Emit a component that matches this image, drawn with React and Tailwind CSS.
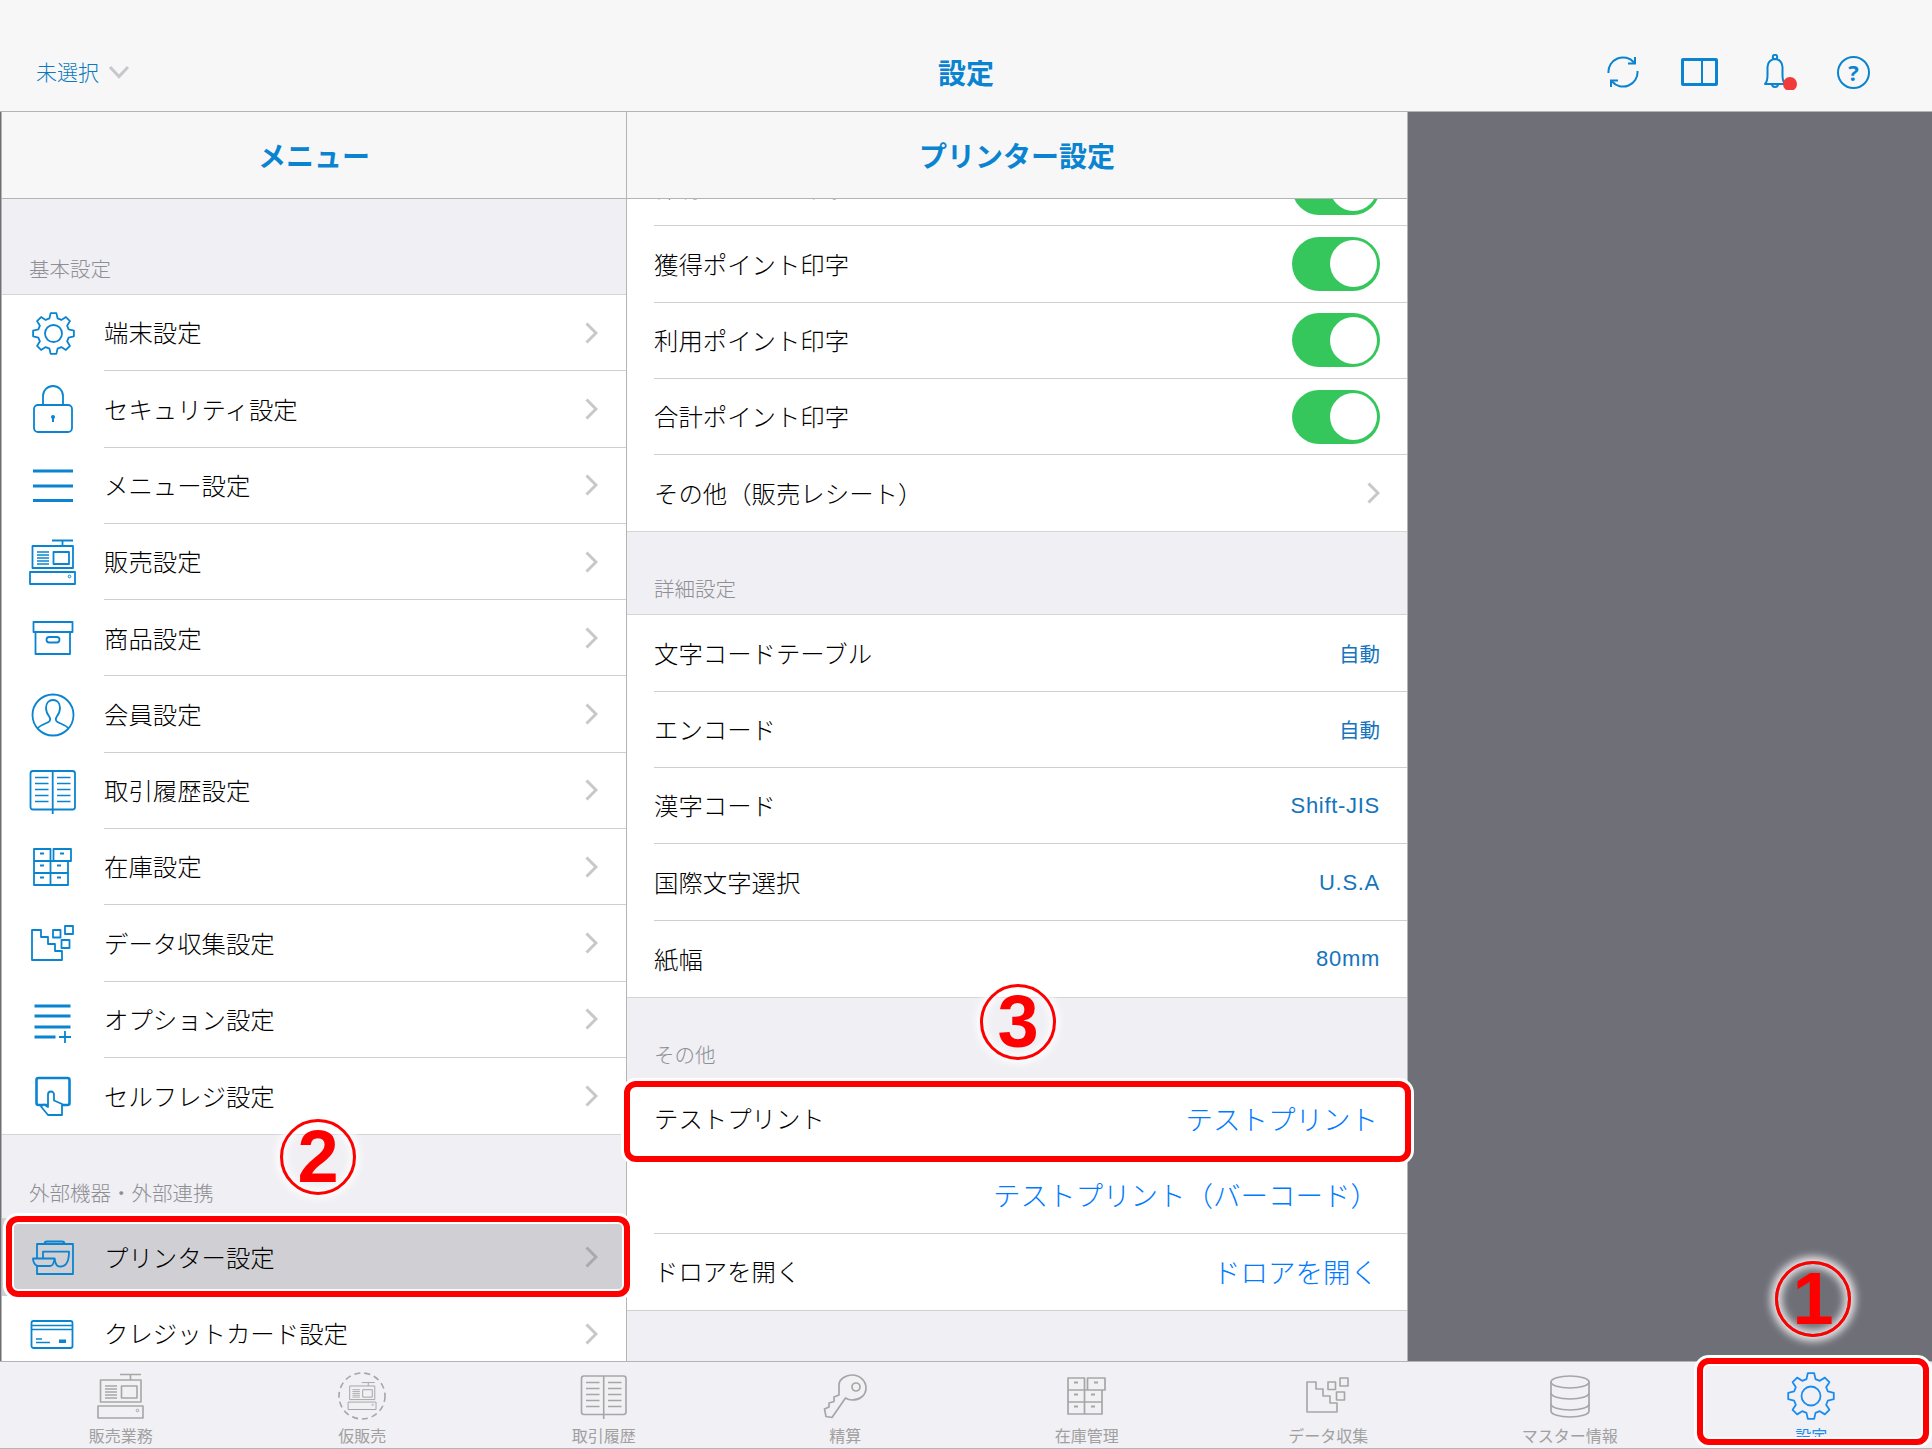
const gearPath = () => {
  const teeth = 8;
  const pts = [];
  for (let i = 0; i < teeth; i++) {
    const a = (i * 360) / teeth - 90;
    const list = [
      [a - 15, 17.5],
      [a - 8, 23],
      [a + 8, 23],
      [a + 15, 17.5],
    ];
    list.forEach(([deg, r]) => {
      const rad = (deg * Math.PI) / 180;
      pts.push(`${(24 + r * Math.cos(rad)).toFixed(2)} ${(24 + r * Math.sin(rad)).toFixed(2)}`);
    });
  }
  return "M" + pts.join("L") + "Z";
};

const Svg = ({ size = 48, sw = 1.8, children }) => (
  <svg width={size} height={size} viewBox="0 0 48 48" fill="none" stroke="currentColor" strokeWidth={sw} strokeLinejoin="round">
    {children}
  </svg>
);

const GearIcon = ({ size = 43, sw = 2 }) => (
  <Svg size={size} sw={sw}>
    <path d={gearPath()} />
    <circle cx="24" cy="24" r="9.5" />
  </Svg>
);

const LockIcon = () => (
  <Svg>
    <rect x="5" y="20" width="38" height="27" rx="4" />
    <path d="M14 20V11a10 10 0 0 1 20 0v9" />
    <circle cx="24" cy="32" r="2" fill="currentColor" stroke="none" />
    <rect x="23" y="33" width="2" height="4" fill="currentColor" stroke="none" />
  </Svg>
);

const MenuIcon = () => (
  <Svg sw={3.2}>
    <path d="M4 9h40M4 24h40M4 38.5h40" />
  </Svg>
);

const RegisterShape = () => (
  <>
    <path d="M23 2.5h21M33.5 2.5V8" />
    <rect x="3.5" y="8" width="40.5" height="22" />
    <rect x="24.5" y="14" width="15.5" height="12" />
    <path d="M8 14h12M8 17h12M8 20h12M8 23h12M8 26h12" strokeWidth="1.4" />
    <rect x="1" y="34" width="45" height="12" />
    <circle cx="40.5" cy="38.5" r="1.3" strokeWidth="1" />
  </>
);

const RegisterIcon = ({ sw = 1.8 }) => (
  <Svg sw={sw}>
    <RegisterShape />
  </Svg>
);

const BoxIcon = () => (
  <Svg>
    <rect x="4.5" y="8" width="39" height="10" />
    <rect x="6.5" y="18" width="34.5" height="22" />
    <rect x="17.5" y="23" width="13" height="5.5" rx="2.7" />
  </Svg>
);

const PersonIcon = () => (
  <Svg>
    <circle cx="24" cy="24" r="20.5" />
    <path d="M8.5 37.5c3-4 8-4.5 11-6.5c2-1.200 2-3 1-5c-2-2.500-3.500-5-3.500-9c0-5 3-8 7-8s7 3 7 8c0 4-1.500 6.500-3.500 9c-1 2-1 3.800 1 5c3 2 8 2.500 11 6.500" />
  </Svg>
);

const BookIcon = ({ sw = 1.8 }) => (
  <Svg sw={sw}>
    <rect x="1.5" y="4" width="44.5" height="38.500" rx="2.500" />
    <path d="M23.700 4v43" />
    <path d="M6 10.500h13.500M6 16.500h13.500M6 22.500h13.500M6 28.500h13.500M6 34.500h13.500M28 10.500h13.500M28 16.500h13.500M28 22.500h13.500M28 28.500h13.500M28 34.500h13.500" strokeWidth="1.500" />
  </Svg>
);

const ShelvesIcon = ({ sw = 1.8 }) => (
  <Svg sw={sw}>
    <path d="M5 6h16.500v12H5zM24.500 6H42v12H24.500zM5 18h16.500v12H5zM21.500 18H39v12H21.500zM5 30h16.500v12H5zM21.500 30H39v12H21.500z" />
    <path d="M11 10.500h4M31 10.500h4M11 22.500h4M28 22.500h4M11 34.500h4M28 34.500h4" strokeWidth="2" />
  </Svg>
);

const DataIcon = ({ sw = 1.8 }) => (
  <Svg sw={sw}>
    <path d="M3 10h9v7h7v7h7v7h7v9H3z" />
    <rect x="24" y="10" width="7.500" height="7.500" />
    <rect x="36" y="6" width="8" height="8" />
    <rect x="32.500" y="20" width="8" height="8" />
  </Svg>
);

const OptionIcon = () => (
  <Svg>
    <path d="M5.500 10h36M5.500 20h36M5.500 31h36M5.500 41h21" strokeWidth="3" />
    <path d="M36 35v12M30 41h12" strokeWidth="1.800" />
  </Svg>
);

const SelfIcon = () => (
  <Svg>
    <rect x="7.500" y="6" width="33" height="27" rx="2" strokeWidth="2.600" />
    <path d="M19 33V22.500a3 3 0 0 1 6 0V28.500L33 32V43H19l-7-8.500l3-2l4 2.500z" fill="white" />
  </Svg>
);

const PrinterIcon = () => (
  <Svg>
    <path d="M15.500 11c0-1.500 1-2.500 2.500-2.500h15c1.500 0 2.500 1 2.500 2.500" />
    <rect x="8" y="11" width="36" height="30" />
    <path d="M14 25V18.700H40C40 26 38 33 32 33.500C28 34 26.500 32 25.500 25.500" />
    <path d="M4 25.500H25.500C25 30 24 33 21 33H9C6 33 4 29 4 25.500Z" fill="#cfcfd4" />
  </Svg>
);

const CardIcon = () => (
  <Svg>
    <rect x="2.500" y="11" width="41" height="27" rx="2" />
    <path d="M2.500 15.500h41M2.500 19.500h41" strokeWidth="1.500" />
    <path d="M7 29h6M7 32.500h14" strokeWidth="1.500" />
    <rect x="30" y="29.500" width="7" height="3.500" fill="currentColor" stroke="none" />
  </Svg>
);

const HoldIcon = () => (
  <Svg sw={1.6}>
    <circle cx="24" cy="24" r="23" strokeDasharray="6 4" />
    <g transform="translate(9.500 9) scale(0.62)">
      <RegisterShape />
    </g>
  </Svg>
);

const KeyIcon = () => (
  <Svg sw={1.7}>
    <path d="M5 44.500L3.500 37l4.500-2v-4l5-1.500V25l5-2V13C18 7 25 3 31 3c8 0 14 6 14 13c0 8-7 12-14 12c-3 0-5-1-6.500-2L11 45.500z" />
    <circle cx="35" cy="15" r="4" />
  </Svg>
);

const DbIcon = () => (
  <Svg sw={1.7}>
    <ellipse cx="24" cy="10" rx="19" ry="6" />
    <path d="M5 10v29c0 3.500 8.500 6 19 6s19-2.500 19-6V10" />
    <path d="M5 21c0 3.500 8.500 6 19 6s19-2.500 19-6M5 32c0 3.500 8.500 6 19 6s19-2.500 19-6" />
  </Svg>
);

const Chevron = ({ color = "#c7c7cc" }) => (
  <svg width="13" height="22" viewBox="0 0 13 22" fill="none" stroke={color} strokeWidth="3">
    <path d="M1.500 1.500L11 11L1.500 20.500" />
  </svg>
);

const Toggle = () => (
  <div className="w-[88px] h-[54px] rounded-full bg-[#36c75c] flex items-center justify-end pr-[3px]">
    <div className="w-[47px] h-[47px] rounded-full bg-white" />
  </div>
);

const menuRows = [
  { icon: <GearIcon />, label: "端末設定" },
  { icon: <LockIcon />, label: "セキュリティ設定" },
  { icon: <MenuIcon />, label: "メニュー設定" },
  { icon: <RegisterIcon />, label: "販売設定" },
  { icon: <BoxIcon />, label: "商品設定" },
  { icon: <PersonIcon />, label: "会員設定" },
  { icon: <BookIcon />, label: "取引履歴設定" },
  { icon: <ShelvesIcon />, label: "在庫設定" },
  { icon: <DataIcon />, label: "データ収集設定" },
  { icon: <OptionIcon />, label: "オプション設定" },
  { icon: <SelfIcon />, label: "セルフレジ設定" },
];

const MenuRow = ({ icon, label, selected, last }) => (
  <div className={`h-[76.3px] shrink-0 flex ${selected ? "bg-[#cfcfd4]" : "bg-white"}`}>
    <div className="w-[102px] shrink-0 flex items-center justify-center text-[#0a84d0]">{icon}</div>
    <div className={`flex-1 flex items-center justify-between pr-[28px] ${last ? "" : "border-b border-[#cfcfd2]"}`}>
      <span className="text-[24.4px] font-light text-black">{label}</span>
      <Chevron color={selected ? "#a9a9ae" : "#c7c7cc"} />
    </div>
  </div>
);

const Section = ({ label, className, pl }) => (
  <div className={`shrink-0 flex items-end pb-[12px] border-b border-[#d4d4d8] ${className} ${pl}`}>
    <span className="text-[20.5px] leading-[28px] font-light text-[#8e8e93]">{label}</span>
  </div>
);

const SettingRow = ({ label, last, children }) => (
  <div className="h-[76.3px] shrink-0 bg-white pl-[27px]">
    <div className={`h-full flex items-center justify-between pr-[27px] ${last ? "" : "border-b border-[#cfcfd2]"}`}>
      <span className="text-[24.4px] font-light text-black">{label}</span>
      {children}
    </div>
  </div>
);

const Value = ({ children }) => <span className="text-[20.5px] text-[#1574bc]">{children}</span>;
const LatinValue = ({ children }) => (
  <span className="text-[22px] tracking-[0.7px] text-[#1574bc] font-['Liberation_Sans',sans-serif]">{children}</span>
);
const Action = ({ children }) => <span className="text-[27.5px] font-light text-[#007aff] mr-[2px]">{children}</span>;

const tabs = [
  { icon: <RegisterIcon sw={1.6} />, label: "販売業務" },
  { icon: <HoldIcon />, label: "仮販売" },
  { icon: <BookIcon sw={1.6} />, label: "取引履歴" },
  { icon: <KeyIcon />, label: "精算" },
  { icon: <ShelvesIcon sw={1.7} />, label: "在庫管理" },
  { icon: <DataIcon sw={1.6} />, label: "データ収集" },
  { icon: <DbIcon />, label: "マスター情報" },
];

// red call-outs laid over the screenshot
const Frame = ({ className }) => (
  <div className={`absolute rounded-[12px] border-[6px] border-[#f00] shadow-[0_0_0_3px_white,inset_0_0_0_2px_white] ${className}`} />
);

const Badge = ({ n, className }) => (
  <div
    className={`absolute w-[76px] h-[76px] rounded-full border-[3px] border-[#f00] flex items-center justify-center text-[#f00] text-[74px] leading-none font-bold font-['Liberation_Sans',sans-serif] shadow-[0_0_8px_4px_rgba(255,255,255,0.9),inset_0_0_8px_3px_rgba(255,255,255,0.9)] ${className}`}
  >
    {n}
  </div>
);

export default function App() {
  return (
    <div className="relative w-[1932px] h-[1449px] overflow-hidden flex flex-col bg-[#f7f7f7] font-['Noto_Sans_CJK_JP','Noto_Sans',sans-serif]">
      {/* top bar */}
      <div className="h-[112px] shrink-0 pt-[33px] border-b border-[#b4b4b4] grid grid-cols-[1fr_auto_1fr] items-center text-[#0a84d0]">
        <div className="flex items-center gap-[9px] pl-[36px]">
          <span className="text-[21px] font-light text-[#0a78c2]">未選択</span>
          <svg width="22" height="14" viewBox="0 0 22 14" fill="none" stroke="#c7c7cc" strokeWidth="3">
            <path d="M2 2l9 9.500L20 2" />
          </svg>
        </div>
        <span className="text-[28px] font-bold">設定</span>
        <div className="flex items-center justify-end pr-[62px]">
          <svg width="32" height="32" viewBox="0 0 32 32" fill="none" stroke="currentColor" strokeWidth="2">
            <path d="M1.500 17A14.500 14.500 0 0 1 27 6.500M30.500 15A14.500 14.500 0 0 1 5 25.500" />
            <path d="M28 1v6.500h-7M4 31v-6.500h7" />
          </svg>
          <div className="ml-[42px] w-[37px] h-[28px] border-[3px] border-[#0a84d0] rounded-[2px] flex justify-end">
            <div className="w-[14px] border-l-2 border-[#0a84d0]" />
          </div>
          <svg className="ml-[46px]" width="34" height="36" viewBox="0 0 34 36" fill="none" stroke="currentColor" strokeWidth="2">
            <circle cx="11" cy="3" r="2.200" />
            <path d="M1 30c2-2 2.500-5 2.500-9v-8C3.500 8.500 7 5 11 5s7.500 3.500 7.500 8v8c0 4 .5 7 2.500 9z" strokeLinejoin="round" />
            <path d="M8 30a3 3 0 0 0 6 0" />
            <circle cx="26" cy="30" r="7" fill="#f13a3a" stroke="none" />
          </svg>
          <div className="ml-[39px] w-[33px] h-[33px] rounded-full border-2 border-[#0a84d0] flex items-center justify-center text-[22px] leading-none font-bold font-['Open_Sans',sans-serif]">?</div>
        </div>
      </div>

      <div className="flex-1 min-h-0 flex bg-[#6f6f78] pl-[1px]">
        {/* menu pane */}
        <div className="w-[626px] shrink-0 flex flex-col border-x border-[#b4b4b4] bg-[#efeff4] overflow-hidden">
          <div className="h-[87px] shrink-0 flex items-center justify-center bg-[#f7f7f7] border-b border-[#b4b4b4]">
            <span className="text-[28px] font-bold text-[#0a84d0]">メニュー</span>
          </div>
          <Section label="基本設定" className="h-[96px]" pl="pl-[27px]" />
          {menuRows.map((row, i) => (
            <MenuRow key={row.label} {...row} last={i === menuRows.length - 1} />
          ))}
          <Section label="外部機器・外部連携" className="h-[85px] border-t" pl="pl-[27px]" />
          <MenuRow icon={<PrinterIcon />} label="プリンター設定" selected last />
          <MenuRow icon={<CardIcon />} label="クレジットカード設定" last />
        </div>

        {/* printer pane */}
        <div className="w-[781px] shrink-0 flex flex-col border-r border-[#b4b4b4] bg-[#efeff4] overflow-hidden">
          <div className="relative z-10 h-[87px] shrink-0 flex items-center justify-center bg-[#f7f7f7] border-b border-[#b4b4b4]">
            <span className="text-[28px] font-bold text-[#0a84d0]">プリンター設定</span>
          </div>
          <div className="-mt-[49px]">
            <SettingRow label="保有ポイント印字"><Toggle /></SettingRow>
          </div>
          <SettingRow label="獲得ポイント印字"><Toggle /></SettingRow>
          <SettingRow label="利用ポイント印字"><Toggle /></SettingRow>
          <SettingRow label="合計ポイント印字"><Toggle /></SettingRow>
          <SettingRow label="その他（販売レシート）" last><Chevron /></SettingRow>
          <Section label="詳細設定" className="h-[84px] border-t" pl="pl-[27px]" />
          <SettingRow label="文字コードテーブル"><Value>自動</Value></SettingRow>
          <SettingRow label="エンコード"><Value>自動</Value></SettingRow>
          <SettingRow label="漢字コード"><LatinValue>Shift-JIS</LatinValue></SettingRow>
          <SettingRow label="国際文字選択"><LatinValue>U.S.A</LatinValue></SettingRow>
          <SettingRow label="紙幅" last><LatinValue>80mm</LatinValue></SettingRow>
          <Section label="その他" className="h-[84px] border-t" pl="pl-[27px]" />
          <SettingRow label="テストプリント"><Action>テストプリント</Action></SettingRow>
          <SettingRow label=""><Action>テストプリント（バーコード）</Action></SettingRow>
          <SettingRow label="ドロアを開く" last><Action>ドロアを開く</Action></SettingRow>
          <div className="border-t border-[#cfcfd2]" />
        </div>
      </div>

      {/* tab bar */}
      <div className="h-[88px] shrink-0 flex bg-[#f0f0f5] border-t border-b border-[#b4b4b4]">
        {tabs.map((tab) => (
          <div key={tab.label} className="flex-1 flex flex-col items-center pt-[10px] text-[#a6a6a6]">
            {tab.icon}
            <span className="mt-[6px] text-[16px] leading-[18px] text-[#a0a0a0]">{tab.label}</span>
          </div>
        ))}
        <div className="flex-1 flex flex-col items-center pt-[10px] text-[#1a8cf0]">
          <GearIcon size={48} sw={1.8} />
          <span className="mt-[6px] text-[16px] leading-[18px]">設定</span>
        </div>
      </div>

      <Frame className="left-[6px] top-[1216px] w-[624px] h-[81px]" />
      <Frame className="left-[624px] top-[1081px] w-[787px] h-[81px]" />
      <Frame className="left-[1697px] top-[1358px] w-[232px] h-[87px]" />
      <Badge n="1" className="left-[1775px] top-[1261px]" />
      <Badge n="2" className="left-[280px] top-[1119px]" />
      <Badge n="3" className="left-[980px] top-[984px]" />
    </div>
  );
}
